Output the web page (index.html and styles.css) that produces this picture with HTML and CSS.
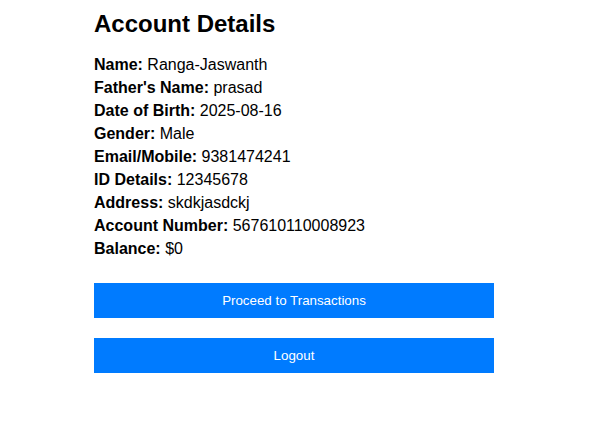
FILE: index.html
```html
<!DOCTYPE html>
<html>
<head>
<meta charset="utf-8">
<link rel="stylesheet" href="styles.css">
</head>
<body>
<div class="container">
  <h2 class="title">Account Details</h2>
  <div class="details">
    <div class="row"><strong>Name:</strong> Ranga-Jaswanth</div>
    <div class="row"><strong>Father's Name:</strong> prasad</div>
    <div class="row"><strong>Date of Birth:</strong> 2025-08-16</div>
    <div class="row"><strong>Gender:</strong> Male</div>
    <div class="row"><strong>Email/Mobile:</strong> 9381474241</div>
    <div class="row"><strong>ID Details:</strong> 12345678</div>
    <div class="row"><strong>Address:</strong> skdkjasdckj</div>
    <div class="row"><strong>Account Number:</strong> 567610110008923</div>
    <div class="row"><strong>Balance:</strong> $0</div>
  </div>
  <div class="actions">
    <button class="btn">Proceed to Transactions</button>
    <button class="btn">Logout</button>
  </div>
</div>
</body>
</html>
```
FILE: styles.css
```css
html, body {
  margin: 0;
  padding: 0;
  background: #ffffff;
}
body {
  font-family: "Liberation Sans", Arial, sans-serif;
  color: #000000;
}
.container {
  width: 400px;
  padding: 10px 0 0 94px;
}
.title {
  font-size: 24px;
  font-weight: bold;
  line-height: 28px;
  margin: 0 0 15px 0;
}
.details {
  display: flex;
  flex-direction: column;
}
.row {
  font-size: 16px;
  line-height: 23px;
}
.row strong {
  font-weight: bold;
}
.actions {
  display: flex;
  flex-direction: column;
  gap: 20px;
  margin-top: 23px;
}
.btn {
  display: block;
  width: 400px;
  height: 35px;
  border: none;
  background: #007bff;
  color: #ffffff;
  font-family: "Liberation Sans", Arial, sans-serif;
  font-size: 13.333px;
  padding: 0;
  cursor: pointer;
}
```
